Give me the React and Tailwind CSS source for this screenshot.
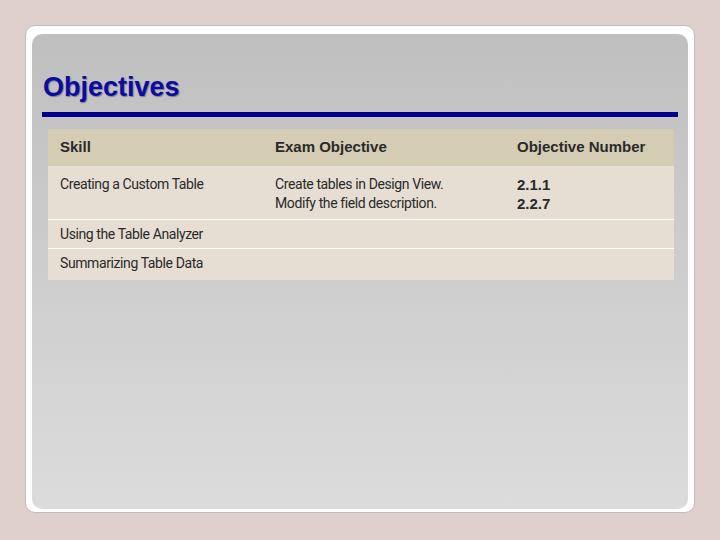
export default function App() {
  const body = "font-[Roboto,sans-serif] text-[14px] text-[#2a2a2a] tracking-[-0.4px]";
  return (
    <div className="w-[720px] h-[540px] bg-[#dfcfcd] pt-[25px] pl-[25px]">
      <div className="w-[670px] h-[488px] bg-white rounded-[10px] border border-[#bdbdbd] pt-[8px] pl-[6px]">
        <div className="w-[656px] h-[475px] rounded-[10px] bg-gradient-to-b from-[#bfbfbf] to-[#dcdcdc] pt-[37px] pl-[10px]">
          <h1 className="font-[Liberation_Sans,Arial,sans-serif] font-bold text-[27px] leading-[32px] text-[#0b0b9e] [text-shadow:1px_1px_1px_#7a7a9a] pl-[1px]">
            Objectives
          </h1>
          <div className="w-[636px] h-[5px] bg-[#00008b] mt-[9px]" />
          <div className="w-[626px] ml-[6px] mt-[12px]">
            <div className="h-[37px] bg-[#d5ccb4] flex items-center font-[Liberation_Sans,Arial,sans-serif] font-bold text-[15px] text-[#2a2a2a]">
              <div className="w-[227px] pl-[12px]">Skill</div>
              <div className="w-[242px]">Exam Objective</div>
              <div>Objective Number</div>
            </div>
            <div className={`h-[53px] bg-[#e6ded2] flex pt-[9px] leading-[19px] ${body}`}>
              <div className="w-[227px] pl-[12px]">Creating a Custom Table</div>
              <div className="w-[242px]">Create tables in Design View.<br />Modify the field description.</div>
              <div className="font-[Liberation_Sans,Arial,sans-serif] font-bold text-[15px] tracking-normal">2.1.1<br />2.2.7</div>
            </div>
            <div className={`h-[29px] bg-[#e6ded2] border-t border-white flex items-center ${body}`}>
              <div className="pl-[12px]">Using the Table Analyzer</div>
            </div>
            <div className={`h-[32px] bg-[#e6ded2] border-t border-white flex items-center pb-[3px] ${body}`}>
              <div className="pl-[12px]">Summarizing Table Data</div>
            </div>
          </div>
        </div>
      </div>
    </div>
  );
}
